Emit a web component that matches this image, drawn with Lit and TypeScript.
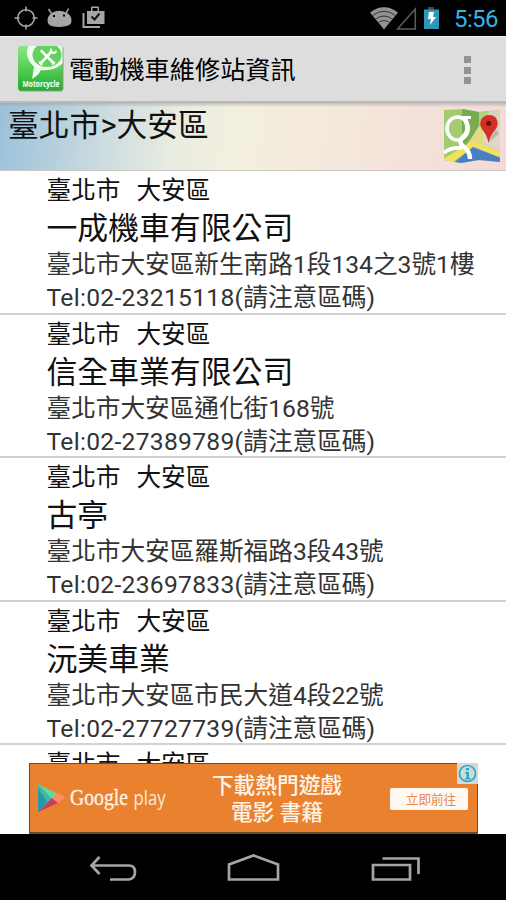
import { LitElement, html, css } from "lit";
import { customElement, property } from "lit/decorators.js";

interface Shop {
  name: string;
  address: string;
  tel: string;
}

const SHOPS: Shop[] = [
  { name: "一成機車有限公司", address: "臺北市大安區新生南路1段134之3號1樓", tel: "02-23215118" },
  { name: "信全車業有限公司", address: "臺北市大安區通化街168號", tel: "02-27389789" },
  { name: "古亭", address: "臺北市大安區羅斯福路3段43號", tel: "02-23697833" },
  { name: "沅美車業", address: "臺北市大安區市民大道4段22號", tel: "02-27727739" },
  { name: "", address: "", tel: "" },
];

@customElement("status-bar")
class StatusBar extends LitElement {
  static styles = css`
    :host { display: flex; height: 36px; flex: none; background: #000; align-items: center; justify-content: space-between; }
    svg { display: block; }
    .right { display: flex; align-items: center; }
    .time { font-size: 24px; line-height: 36px; color: #33b5e5; width: 52px; letter-spacing: -0.6px; padding-top: 1px; }
  `;
  render() {
    return html`
      <svg width="120" height="36" viewBox="0 0 120 36">
        <g fill="none" stroke="#a6a6a6" stroke-width="1.6">
          <circle cx="26" cy="18" r="8.3" />
          <path d="M26 6.500v5M26 24.500v5M14.500 18h5M32.500 18h5" />
        </g>
        <path fill="#a6a6a6" d="M52.500 12.500q6.500-3.500 13.500 0q5.500 2.500 5.500 8q0 4.500-5 5.500q-6.500 1.500-13 .5q-6-.8-6-6q0-5 5-8z" />
        <path stroke="#a6a6a6" stroke-width="1.500" d="M51.500 13.500l-3-4.500M66 13.500l2.500-5" />
        <path fill="#000" d="M53 15h2v2h-2zM63 14.500h2v2h-2z" />
        <path fill="none" stroke="#a6a6a6" stroke-width="2" d="M83.500 13v14h16.500" />
        <path fill="#a6a6a6" fill-rule="evenodd" d="M87 11h4V7.500q0-1 1-1h6q1 0 1 1V11h5.500v13H87zM92.500 11h5V8h-5z" />
        <path fill="none" stroke="#111" stroke-width="2" d="M91.500 16.500l3 3 5-6" />
      </svg>
      <div class="right">
        <svg width="85" height="36" viewBox="370 0 85 36">
          <path fill="#929292" d="M371 12.500Q385 2 399 12.500L385 29.500z" />
          <g fill="none" stroke="#333" stroke-width="1">
            <path d="M373.500 15.500Q385 7 396.500 15.500M376.500 19Q385 13 393.500 19M379.500 22.500Q385 18.500 390.500 22.500" />
          </g>
          <path fill="none" stroke="#5c5c5c" stroke-width="1.500" d="M398.500 29L416.300 9v20z" />
          <path fill="#444" d="M429 7h6v3h-6z" />
          <path fill="#3096b7" d="M425 9.500h15V29h-15z" />
          <path fill="#fff" d="M430 12h5l-1 5h3l-6 8 1-6h-3z" />
        </svg>
        <div class="time">5:56</div>
      </div>
    `;
  }
}

@customElement("action-bar")
class ActionBar extends LitElement {
  static styles = css`
    :host { display: flex; height: 67px; flex: none; box-sizing: border-box; align-items: center; background: #ddd; border-top: 1px solid #f1f1f1; border-bottom: 2px solid #b9b9b9; padding: 0 35px 0 17px; }
    .title { flex: 1; font-size: 25.200px; line-height: 40px; white-space: nowrap; padding: 4px 0 0 5px; color: #000; }
    .menu { display: grid; gap: 3.500px; padding-top: 2px; }
    .dot { width: 7px; height: 7px; background: #939393; }
    .label { font: bold 8.500px "Open Sans", sans-serif; fill: #fff; }
  `;
  render() {
    return html`
      <svg width="47" height="48" viewBox="0 0 47 48">
        <defs>
          <linearGradient id="leaf" x2="0" y2="1">
            <stop offset="0" stop-color="#8fe68c" /><stop offset=".5" stop-color="#55cc54" /><stop offset="1" stop-color="#1ea822" />
          </linearGradient>
          <clipPath id="tile"><rect x="1" y="1" width="44.500" height="44.500" rx="3" /></clipPath>
        </defs>
        <rect x="1.500" y="1.500" width="45" height="45" rx="3" fill="#8ba08b" />
        <g clip-path="url(#tile)">
          <path fill="url(#leaf)" d="M0 0h47v48H0z" />
          <path fill="#effbee" d="M12 0Q6 11 17 22L15 34q6-3 9-9q14 2 23-8V0z" />
          <ellipse cx="30" cy="10" rx="14.500" ry="12" fill="#62d160" />
        </g>
        <path stroke="#fff" stroke-width="2.600" stroke-linecap="round" fill="none" d="M24.500 6L36 17.500M34.500 6.500L24 18" />
        <path stroke="#fff" stroke-width="1.800" fill="none" d="M34 3.500l-.5 4 4 .5 2-2M22 17l3 3M35 19.500l3-2.500" />
        <text class="label" x="5.500" y="42" textLength="37" lengthAdjust="spacingAndGlyphs">Motorcycle</text>
      </svg>
      <div class="title">電動機車維修站資訊</div>
      <div class="menu"><div class="dot"></div><div class="dot"></div><div class="dot"></div></div>
    `;
  }
}

@customElement("region-bar")
class RegionBar extends LitElement {
  static styles = css`
    :host { display: flex; flex: none; height: 68px; box-sizing: border-box; justify-content: space-between; padding: 0 5px 0 8px; border-bottom: 1px solid #ccc8c4;
      background: linear-gradient(180deg, #9998, transparent 4px), linear-gradient(98deg, #9ac1db 0, #b5d0dd 12%, #d3dfe0 24%, #e9ece0 35%, #f2efdf 46%, #f5ebdd 60%, #f4e4da 76%, #f3dad7 100%); }
    .path { font-size: 30.800px; line-height: 46px; white-space: nowrap; }
    svg { display: block; margin-top: 6px; }
  `;
  render() {
    return html`
      <div class="path">臺北市&gt;大安區</div>
      <svg width="58" height="56" viewBox="0 0 58 56">
        <defs>
          <clipPath id="sheet"><path d="M1 1l18-1 17 3L57 1v52l-21-2-18 3-17-3z" /></clipPath>
        </defs>
        <g clip-path="url(#sheet)">
          <path fill="#a3cb72" d="M0 0h58v56H0z" />
          <path fill="#77ad4e" d="M19 0h17v20L19 40z" />
          <path fill="#d9d3bd" d="M46 0h12v56H22v-16z" />
          <path fill="#b1d180" d="M36 0h12L36 20z" />
          <path fill="#e0da84" d="M36 19l8-10v24l-8 3L24 36z" />
          <path fill="#ddd8c8" d="M40 20h18v21L40 33z" />
          <path fill="#f2e15c" d="M0 50l30-18 28 11v7L32 37 6 56H0z" />
          <path fill="#4a7fc4" d="M8 56l22-18 28 11v7z" />
        </g>
        <g fill="none" stroke="#fff">
          <ellipse cx="14.500" cy="19.500" rx="10.500" ry="11.500" stroke-width="3.600" />
          <path stroke-width="3" d="M13 8.500h15" />
          <path stroke-width="4.500" d="M22 10q6 12-2 18-5 5 0 9 7 5 7 13" />
          <path stroke-width="3.600" d="M1 44q6-6 18-5" />
        </g>
        <path d="M45 34l8-14 3 5z" fill="#777" opacity=".35" />
        <path fill="#d52e26" d="M45.500 34Q44 26 39.500 21 35.500 15.500 38.500 10q3-4 7.500-4 6 0 8 5 2 5-2 10-5 6-6.500 13z" />
        <circle cx="45.700" cy="14.500" r="2.500" fill="#64110f" />
      </svg>
    `;
  }
}

@customElement("shop-row")
class ShopRow extends LitElement {
  @property({ attribute: false }) shop!: Shop;
  static styles = css`
    :host { display: block; flex: none; height: 143.500px; box-sizing: border-box; padding: 2px 0 0 46.500px; border-bottom: 2px solid #d2d2d2; white-space: nowrap; font-size: 24.650px; color: #333; }
    .region { display: flex; gap: 16px; line-height: 35px; height: 33px; color: #111; }
    .name { font-size: 30.850px; line-height: 46px; height: 44px; color: #111; }
    .address { line-height: 30px; height: 31px; }
    .tel { line-height: 33px; height: 31px; }
    .number { letter-spacing: 0.280px; }
  `;
  render() {
    const { name, address, tel } = this.shop;
    return html`
      <div class="region"><span>臺北市</span><span>大安區</span></div>
      <div class="name">${name}</div>
      <div class="address">${address}</div>
      <div class="tel">${tel ? html`<span class="number">Tel:${tel}(</span>請注意區碼)` : ""}</div>
    `;
  }
}

@customElement("ad-banner")
class AdBanner extends LitElement {
  static styles = css`
    :host { position: absolute; left: 29px; right: 28px; bottom: 0; height: 71px; box-sizing: border-box; border: 1px solid #6c4a2c; border-bottom-width: 2px; background: #e9812f; display: grid; grid-template-columns: 157px 180px 1fr; color: #fff3e8; }
    .brand { display: flex; align-items: center; }
    .word { font-family: "Open Sans", sans-serif; font-size: 20px; fill: #ffe9d8; }
    .serif { font-family: "Liberation Serif", serif; font-size: 23px; fill: #fff3e8; stroke: #fff3e8; stroke-width: .3px; }
    .copy { font-size: 21.700px; line-height: 26.500px; text-align: center; padding-top: 9px; font-weight: 500; white-space: nowrap; }
    .cta { width: 78px; height: 22px; margin: 24px 0 0 23px; border-radius: 2px; background: #fff9f3; color: #e58950; font-size: 12.600px; line-height: 23px; text-align: center; padding-left: 4px; box-sizing: border-box; }
    .info { position: absolute; right: -1px; top: -1px; width: 21px; height: 21px; background: #d4d9d7; }
  `;
  render() {
    return html`
      <div class="brand">
        <svg width="150" height="50" viewBox="0 0 150 50">
          <path fill="#42b8a2" d="M8 11v28l15-14z" />
          <path fill="#65d99d" d="M8 11l20 10-6 5z" />
          <path fill="#2697a8" d="M8 15v24l9-10z" />
          <path fill="#c63f5c" d="M8 39l14-14 6 5z" />
          <path fill="#ff8a63" d="M28 20l7.500 4.500L28 30l-6-5z" />
          <text class="serif" x="40" y="32" textLength="58" lengthAdjust="spacingAndGlyphs">Google</text>
          <text class="word" x="103.500" y="32" textLength="32" lengthAdjust="spacingAndGlyphs">play</text>
        </svg>
      </div>
      <div class="copy">下載熱門遊戲<br />電影 書籍</div>
      <div class="cta">立即前往</div>
      <svg class="info" viewBox="0 0 21 21">
        <circle cx="10.500" cy="10.500" r="8" fill="none" stroke="#29a9c8" stroke-width="1.700" />
        <path fill="#29a9c8" d="M9 5h3v2.500H9zM8 9h4v6h1.500v1.500H8V15h1.500v-4.500H8z" />
      </svg>
    `;
  }
}

@customElement("nav-bar")
class NavBar extends LitElement {
  static styles = css`
    :host { display: flex; flex: none; height: 66px; background: #000; justify-content: center; }
  `;
  render() {
    return html`
      <svg width="506" height="66" viewBox="0 834 506 66" fill="none" stroke="#a5a5a5" stroke-width="2.700">
        <path d="M99.500 857l-8 8.500 8 8.500M91.500 865.500H129q6 0 6 6.500t-6 7.500H110" />
        <path d="M229 879.500V864.500L253.500 855.500 278 864.500V879.500z" />
        <path d="M373 865h37v14.500h-37zM382.500 858.500H418.500V874" />
      </svg>
    `;
  }
}

@customElement("app-root")
class AppRoot extends LitElement {
  static styles = css`
    :host { display: flex; flex-direction: column; height: 900px; overflow: hidden; background: #fff; color: #111; font-family: Roboto, "Noto Sans CJK TC", sans-serif; }
    .list { position: relative; flex: 1; min-height: 0; overflow: hidden; display: flex; flex-direction: column; }
  `;
  render() {
    return html`
      <status-bar></status-bar>
      <action-bar></action-bar>
      <region-bar></region-bar>
      <div class="list">
        ${SHOPS.map((shop) => html`<shop-row .shop=${shop}></shop-row>`)}
        <ad-banner></ad-banner>
      </div>
      <nav-bar></nav-bar>
    `;
  }
}
